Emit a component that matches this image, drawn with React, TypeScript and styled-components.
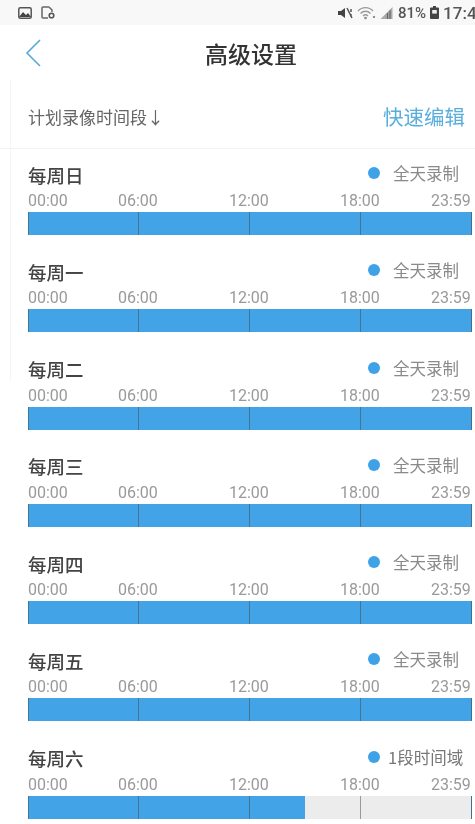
import styled, { createGlobalStyle } from "styled-components";

const FONT = `"Noto Sans CJK SC", "Noto Sans", Roboto, sans-serif`;

const days = [
  { name: "每周日", status: "全天录制", fill: 100 },
  { name: "每周一", status: "全天录制", fill: 100 },
  { name: "每周二", status: "全天录制", fill: 100 },
  { name: "每周三", status: "全天录制", fill: 100 },
  { name: "每周四", status: "全天录制", fill: 100 },
  { name: "每周五", status: "全天录制", fill: 100 },
  { name: "每周六", status: "1段时间域", fill: 62.6 },
];

const hours = ["00:00", "06:00", "12:00", "18:00", "23:59"];

export default function App() {
  return (
    <>
      <GlobalStyle />
      <Page>
        <EdgeLine />
        <StatusBar>
          <StatusIcons>
            <svg width="14" height="12" viewBox="0 0 14 12">
              <rect x="0.8" y="0.8" width="12.4" height="10.4" rx="1.5" fill="none" stroke="#555" strokeWidth="1.5" />
              <path d="M1 10 L5 5 L8 8 L10 6 L13 10 Z" fill="#444" />
            </svg>
            <svg width="14" height="13" viewBox="0 0 14 13">
              <path d="M8 1 H2 A1 1 0 0 0 1 2 V11 A1 1 0 0 0 2 12 H7 M8 1 L11 4 V6" fill="none" stroke="#666" strokeWidth="1.5" />
              <circle cx="10.5" cy="9.5" r="2.3" fill="none" stroke="#555" strokeWidth="1.6" />
            </svg>
          </StatusIcons>
          <StatusRight>
            <svg width="16" height="12" viewBox="0 0 16 12">
              <path d="M1 4 H4 L8 1 V11 L4 8 H1 Z" fill="#444" />
              <path d="M10 1 L15 11 M14 2 V5 M14 7 V10" stroke="#555" strokeWidth="1.5" fill="none" />
            </svg>
            <svg width="19" height="14" viewBox="0 0 19 14">
              <path d="M1 5 C5 0.5 12 0.5 16 5 M3.5 7.5 C6.5 4.5 10.5 4.5 13.5 7.5 M6 10 C7.5 8.5 9.5 8.5 11 10" stroke="#999" strokeWidth="1.3" fill="none" />
              <circle cx="8.5" cy="12" r="1.3" fill="#888" />
              <circle cx="17" cy="11" r="1.1" fill="#777" />
            </svg>
            <svg width="14" height="12" viewBox="0 0 13 12">
              <path d="M0 12 L12 0 V12 Z" fill="#aaa" />
              <path d="M7 12 V6 M9.5 12 V3.5" stroke="#666" strokeWidth="1.2" />
            </svg>
            <Percent>81%</Percent>
            <svg width="9" height="13" viewBox="0 0 9 13">
              <path d="M3 0 H6 V1.5 H8 A1 1 0 0 1 9 2.5 V12 A1 1 0 0 1 8 13 H1 A1 1 0 0 1 0 12 V2.5 A1 1 0 0 1 1 1.5 H3 Z" fill="#444" />
              <rect x="2.2" y="4" width="4.6" height="3.6" fill="#eee" />
            </svg>
            <Clock>17:40</Clock>
          </StatusRight>
        </StatusBar>

        <Header>
          <BackButton>
            <svg width="16" height="28" viewBox="0 0 16 28">
              <path d="M15 1 L2 14 L15 27" fill="none" stroke="#55aadb" strokeWidth="1.6" />
            </svg>
          </BackButton>
          <Title>高级设置</Title>
        </Header>

        <SectionBar>
          <SectionLabel>计划录像时间段↓</SectionLabel>
          <QuickEdit>快速编辑</QuickEdit>
        </SectionBar>

        <DayList>
          {days.map((day) => (
            <DayRow key={day.name}>
              <DayHead>
                <DayName>{day.name}</DayName>
                <DayStatus>
                  <Dot />
                  <StatusText $wide={day.fill < 100}>{day.status}</StatusText>
                </DayStatus>
              </DayHead>
              <HourScale>
                {hours.map((h) => (
                  <span key={h}>{h}</span>
                ))}
              </HourScale>
              <TimeBar $fill={day.fill}>
                <Slot />
                <Slot />
                <Slot />
                <Slot />
              </TimeBar>
            </DayRow>
          ))}
        </DayList>
      </Page>
    </>
  );
}

const GlobalStyle = createGlobalStyle`
  html, body {
    margin: 0;
    padding: 0;
    background: #fff;
    overflow: hidden;
  }
`;

const Page = styled.div`
  position: relative;
  width: 475px;
  height: 824px;
  overflow: hidden;
  background: #fff;
  font-family: ${FONT};
  filter: blur(0.45px);
`;

const EdgeLine = styled.div`
  position: absolute;
  left: 10px;
  top: 79px;
  width: 1px;
  height: 302px;
  background: #f5f5f5;
`;

const StatusBar = styled.div`
  height: 25px;
  padding: 0 0 0 18px;
  background: #f8f8f8;
  display: flex;
  align-items: center;
  justify-content: space-between;
`;

const StatusIcons = styled.div`
  display: flex;
  align-items: center;
  gap: 9px;
`;

const StatusRight = styled.div`
  width: 138px;
  flex: none;
  display: flex;
  align-items: center;
  gap: 4px;
  white-space: nowrap;
  overflow: hidden;

  svg {
    flex: none;
  }
`;

const Percent = styled.span`
  flex: none;
  font-family: Roboto, sans-serif;
  font-size: 15px;
  font-weight: 500;
  color: #555;
`;

const Clock = styled.span`
  flex: none;
  font-family: Roboto, sans-serif;
  font-size: 17px;
  font-weight: 500;
  color: #555;
`;

const Header = styled.div`
  height: 55px;
  padding: 0 0 0 25px;
  display: flex;
  align-items: center;
`;

const BackButton = styled.div`
  width: 16px;
  display: flex;
  align-items: center;
  margin-right: 164px;
`;

const Title = styled.div`
  font-size: 23px;
  font-weight: 500;
  color: #333;
  line-height: 30px;
`;

const SectionBar = styled.div`
  height: 69px;
  padding: 4px 10px 0 28px;
  border-bottom: 1px solid #f2f2f2;
  box-sizing: border-box;
  display: flex;
  align-items: center;
  justify-content: space-between;
`;

const SectionLabel = styled.div`
  font-size: 17px;
  color: #666;
`;

const QuickEdit = styled.div`
  font-size: 20.5px;
  color: #5aaedc;
`;

const DayList = styled.div`
  display: flex;
  flex-direction: column;
  padding: 0 3px 0 28px;
`;

const DayRow = styled.div`
  height: 97.3px;
  padding-top: 12px;
  box-sizing: border-box;
  flex: none;
`;

const DayHead = styled.div`
  height: 27px;
  display: flex;
  align-items: center;
  justify-content: space-between;
`;

const DayName = styled.div`
  font-size: 18.5px;
  font-weight: 500;
  color: #444;
`;

const DayStatus = styled.div`
  width: 104px;
  display: flex;
  align-items: center;
  margin-bottom: 3px;
`;

const Dot = styled.span`
  width: 12px;
  height: 12px;
  flex: none;
  border-radius: 50%;
  background: #3fa2e6;
`;

const StatusText = styled.span<{ $wide: boolean }>`
  margin-left: ${(p) => (p.$wide ? 8 : 13)}px;
  font-size: 16.5px;
  color: ${(p) => (p.$wide ? "#777" : "#8a8a8a")};
  white-space: nowrap;
`;

const HourScale = styled.div`
  height: 24px;
  padding-top: 1px;
  box-sizing: border-box;
  display: grid;
  grid-template-columns: 90px 111px 111px 91px 41px;
  align-items: center;
  font-family: Roboto, sans-serif;
  font-size: 16px;
  color: #9a9a9a;
`;

const TimeBar = styled.div<{ $fill: number }>`
  height: 23px;
  display: grid;
  grid-template-columns: 110px 111px 111px 1fr;
  background: linear-gradient(
    90deg,
    #42a3e6 ${(p) => p.$fill}%,
    #ececec ${(p) => p.$fill}%
  );
  border-right: 1.5px solid rgba(70, 70, 70, 0.55);
`;

const Slot = styled.div`
  border-left: 1.5px solid rgba(70, 70, 70, 0.5);
`;
